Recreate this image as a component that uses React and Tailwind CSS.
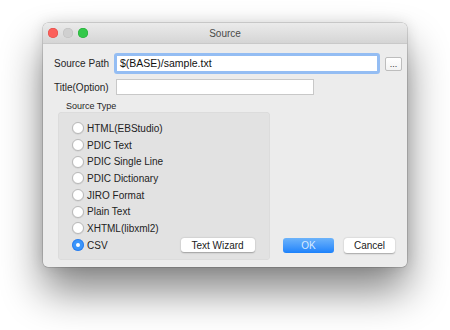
import React from "react";

const items = [
  "HTML(EBStudio)",
  "PDIC Text",
  "PDIC Single Line",
  "PDIC Dictionary",
  "JIRO Format",
  "Plain Text",
  "XHTML(libxml2)",
  "CSV",
];

function Radio({ checked }) {
  if (checked) {
    return (
      <span className="flex h-[12px] w-[12px] shrink-0 items-center justify-center rounded-full bg-[#3a95fb] shadow-[inset_0_0_0_1px_rgba(30,110,230,0.6)]">
        <span className="h-[4px] w-[4px] rounded-full bg-white" />
      </span>
    );
  }
  return (
    <span className="h-[12px] w-[12px] shrink-0 rounded-full border border-[#b9b9b9] bg-white shadow-[0_0.5px_1px_rgba(0,0,0,0.12)]" />
  );
}

export default function App() {
  return (
    <div
      className="h-[330px] w-[450px] bg-white pl-[43px] pt-[23px] text-[10px] text-[#222]"
      style={{ fontFamily: '"Liberation Sans", Arial, sans-serif' }}
    >
      <div className="flex h-[244px] w-[364px] flex-col overflow-hidden rounded-[5px] bg-[#ececec] shadow-[0_24px_42px_rgba(0,0,0,0.48),0_0_14px_rgba(0,0,0,0.12),0_0_0_0.5px_rgba(0,0,0,0.25)]">
        {/* title bar */}
        <div className="grid h-[21px] shrink-0 grid-cols-[1fr_auto_1fr] items-center border-b border-[#c9c9c9] bg-gradient-to-b from-[#ebebeb] to-[#d5d5d5]">
          <div className="flex items-center gap-[5px] pl-[5px]">
            <span className="h-[10px] w-[10px] rounded-full bg-[#fc605b] shadow-[inset_0_0_0_0.5px_#de4a45]" />
            <span className="h-[10px] w-[10px] rounded-full bg-[#d0d0d0] shadow-[inset_0_0_0_0.5px_#bdbdbd]" />
            <span className="h-[10px] w-[10px] rounded-full bg-[#34c84a] shadow-[inset_0_0_0_0.5px_#22a834]" />
          </div>
          <div className="text-[10px] text-[#4a4a4a]">Source</div>
          <div />
        </div>

        {/* body */}
        <div className="flex flex-1 flex-col pl-[11px] pt-[9px] pb-[7px]">
          <div className="flex h-[21px] items-center">
            <div className="w-[60px] shrink-0 text-[10px] text-[#262626]">Source Path</div>
            <div className="flex h-[21px] w-[266px] shrink-0 items-center rounded-[3px] border-[3px] border-[#94bdf3] bg-white pl-[3px] text-[10.5px] text-[#111]">
              $(BASE)/sample.txt
            </div>
            <div className="ml-[5px] flex h-[14px] w-[17px] shrink-0 items-center justify-center rounded-[2px] border border-[#bdbdbd] bg-gradient-to-b from-white to-[#f3f3f3] text-[9px] leading-[12px] text-[#333]">
              ...
            </div>
          </div>

          <div className="mt-[5px] flex h-[16px] items-center">
            <div className="w-[62px] shrink-0 text-[10px] text-[#262626]">Title(Option)</div>
            <div className="h-[16px] w-[198px] shrink-0 border border-[#c8c8c8] bg-white" />
          </div>

          <div className="flex flex-1 items-end pr-[12px]">
            <div className="ml-[4px] flex shrink-0 flex-col">
              <div className="ml-[8px] h-[11px] text-[9px] leading-[11px] text-[#262626]">Source Type</div>
              <div className="flex h-[148px] w-[212px] flex-col rounded-[4px] bg-[#e2e2e2] pl-[14px] pt-[8px] shadow-[inset_0_0_0_0.5px_rgba(0,0,0,0.05)]">
                {items.map((label, i) => (
                  <div key={label} className="flex h-[16.7px] items-center">
                    <Radio checked={i === items.length - 1} />
                    <span className="ml-[3px] text-[10px] text-[#222]">{label}</span>
                    {i === items.length - 1 && (
                      <div className="ml-[73px] flex h-[14px] w-[74px] items-center justify-center rounded-[3px] bg-white text-[10px] text-[#222] shadow-[0_0.5px_1.5px_rgba(0,0,0,0.3)]">
                        Text Wizard
                      </div>
                    )}
                  </div>
                ))}
              </div>
            </div>
            <div className="mb-[7px] flex flex-1 justify-end gap-[10px]">
              <div className="flex h-[15px] w-[51px] items-center justify-center rounded-[3px] bg-gradient-to-b from-[#6cb3fa] to-[#1a82fb] text-[10px] text-[#d8eaff]">
                OK
              </div>
              <div className="flex h-[15px] w-[51px] items-center justify-center rounded-[3px] bg-white text-[10px] text-[#222] shadow-[0_0.5px_1.5px_rgba(0,0,0,0.3)]">
                Cancel
              </div>
            </div>
          </div>
        </div>
      </div>
    </div>
  );
}
